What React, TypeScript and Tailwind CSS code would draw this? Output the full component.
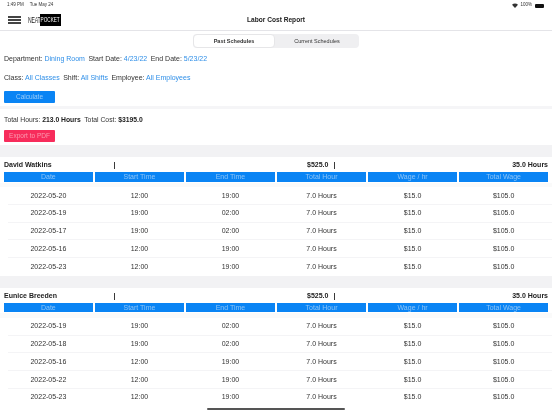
import React from "react";

const sans = { fontFamily: '"Liberation Sans", Arial, sans-serif' };

type Row = [string, string, string];

function Employee({ name, rows }: { name: string; rows: Row[] }) {
  return (
    <section>
      <div className="h-[14px] mt-[1px] px-1 flex items-center text-[7px] font-bold text-[#222]">
        <span className="w-[109.5px]">{name}</span>
        <span className="w-[193.5px] font-bold">|</span>
        <span className="w-[26.5px]">$525.0</span>
        <span>|</span>
        <span className="ml-auto">35.0 Hours</span>
      </div>
      <div className="grid grid-cols-6 gap-[1.3px] px-[3.5px] h-[9.5px]">
        {["Date", "Start Time", "End Time", "Total Hour", "Wage / hr", "Total Wage"].map((h) => (
          <div key={h} className="bg-[#0a84f4] text-[#8cc4f7] text-[7px] leading-none flex items-center justify-center">
            {h}
          </div>
        ))}
      </div>
      <div className="h-[4.5px] mt-[1px] bg-[#fafafa]" />
      {rows.map((r, i) => (
        <div key={i} className="grid grid-cols-6 gap-[1.3px] pr-[3.5px] pl-[3.5px] h-[17.75px] items-center text-[7px] text-[#333] relative">
          <span className="text-center">{r[0]}</span>
          <span className="text-center">{r[1]}</span>
          <span className="text-center">{r[2]}</span>
          <span className="text-center">7.0 Hours</span>
          <span className="text-center">$15.0</span>
          <span className="text-center">$105.0</span>
          {i < rows.length - 1 && <div className="absolute left-[8px] right-0 bottom-0 h-[1px] bg-[#f4f4f6]" />}
        </div>
      ))}
    </section>
  );
}

export default function App() {
  return (
    <div style={sans} className="relative w-[552px] h-[414px] overflow-hidden bg-white [will-change:transform]">
      <div className="h-[10px] flex items-center justify-between px-[7px] pt-[1px] text-[4.5px] text-[#333]">
        <div className="flex gap-[6px]"><span>1:49 PM</span><span>Tue May 24</span></div>
        <div className="flex items-center gap-[2px]">
          <svg width="6" height="5" viewBox="0 0 12 10"><path d="M6 10 0 3.5C3.5 0 8.500 0 12 3.500Z" fill="#333" /></svg>
          <span>100%</span>
          <span className="w-[9px] h-[4px] rounded-[1px] bg-[#111] ml-[1px] mr-[1px]" />
        </div>
      </div>
      <header className="h-[21px] relative flex items-center px-2 border-b border-[#e4e4e8]">
        <div className="flex flex-col gap-[1.5px] w-[13px]">
          <span className="h-[1.5px] bg-[#444]" />
          <span className="h-[1.5px] bg-[#444]" />
          <span className="h-[1.5px] bg-[#444]" />
        </div>
        <div className="ml-[7px] flex items-center h-[12px] leading-none">
          <div className="w-[12px] text-[8.5px] text-[#222]">
            <span className="inline-block scale-x-[0.6] origin-left tracking-[-0.3px]">NEAT</span>
          </div>
          <div className="w-[21px] h-[12px] bg-black text-white flex items-center text-[8px]">
            <span className="inline-block pl-[1px] scale-x-[0.58] origin-left">POCKET</span>
          </div>
        </div>
        <span className="absolute left-0 right-0 text-center text-[6.600px] font-bold text-[#222] pointer-events-none">Labor Cost Report</span>
      </header>
      <div className="flex justify-center pt-[3px]">
        <div className="w-[166px] h-[14px] rounded-[4px] bg-[#efeff1] flex text-[5.500px] text-[#333]">
          <div className="w-[82px] rounded-[4px] bg-white border border-[#e6e6e8] flex items-center justify-center font-bold">Past Schedules</div>
          <div className="flex-1 flex items-center justify-center">Current Schedules</div>
        </div>
      </div>
      <div className="px-1 mt-[6px] h-[10px] flex items-center gap-[3.500px] text-[7px] text-[#333]">
        <span>Department: <b className="font-normal text-[#2f8fe8]">Dining Room</b></span>
        <span>Start Date: <b className="font-normal text-[#2f8fe8]">4/23/22</b></span>
        <span>End Date: <b className="font-normal text-[#2f8fe8]">5/23/22</b></span>
      </div>
      <div className="px-1 mt-[9px] h-[10px] flex items-center gap-[3.500px] text-[7px] text-[#333]">
        <span>Class: <b className="font-normal text-[#2f8fe8]">All Classes</b></span>
        <span>Shift: <b className="font-normal text-[#2f8fe8]">All Shifts</b></span>
        <span>Employee: <b className="font-normal text-[#2f8fe8]">All Employees</b></span>
      </div>
      <div className="px-1 mt-[8px]">
        <div className="w-[51px] h-[12px] bg-[#0a84f4] rounded-[1px] flex items-center justify-center text-[6.500px] text-[#9ccdf9]">Calculate</div>
      </div>
      <div className="h-[3px] mt-[3px] bg-[#f5f5f7]" />
      <div className="px-1 mt-[6px] h-[10px] flex items-center gap-[3.500px] text-[6.800px] text-[#333]">
        <span>Total Hours: <b className="text-[#222]">213.0 Hours</b></span>
        <span>Total Cost: <b className="text-[#222]">$3195.0</b></span>
      </div>
      <div className="px-1 mt-[5px]">
        <div className="w-[51px] h-[12px] bg-[#f72c5b] rounded-[1px] flex items-center justify-center text-[6.500px] text-[#fb9ab0]">Export to PDF</div>
      </div>
      <div className="h-[12px] mt-[3px] bg-[#f2f2f4]" />
      <Employee
        name="David Watkins"
        rows={[
          ["2022-05-20", "12:00", "19:00"],
          ["2022-05-19", "19:00", "02:00"],
          ["2022-05-17", "19:00", "02:00"],
          ["2022-05-16", "12:00", "19:00"],
          ["2022-05-23", "12:00", "19:00"],
        ]}
      />
      <div className="h-[12px] bg-[#f2f2f4]" />
      <Employee
        name="Eunice Breeden"
        rows={[
          ["2022-05-19", "19:00", "02:00"],
          ["2022-05-18", "19:00", "02:00"],
          ["2022-05-16", "12:00", "19:00"],
          ["2022-05-22", "12:00", "19:00"],
          ["2022-05-23", "12:00", "19:00"],
        ]}
      />
      <div className="absolute left-[207px] bottom-[4px] w-[138px] h-[2px] rounded-full bg-[#555]" />
    </div>
  );
}
